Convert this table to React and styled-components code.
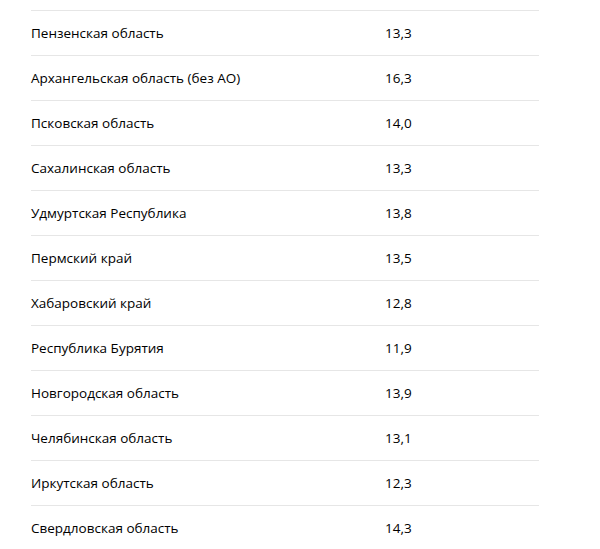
import styled, { createGlobalStyle } from 'styled-components';

const rows = [
  ['Пензенская область', '13,3'],
  ['Архангельская область (без АО)', '16,3'],
  ['Псковская область', '14,0'],
  ['Сахалинская область', '13,3'],
  ['Удмуртская Республика', '13,8'],
  ['Пермский край', '13,5'],
  ['Хабаровский край', '12,8'],
  ['Республика Бурятия', '11,9'],
  ['Новгородская область', '13,9'],
  ['Челябинская область', '13,1'],
  ['Иркутская область', '12,3'],
  ['Свердловская область', '14,3'],
];

const GlobalStyle = createGlobalStyle`
  html, body {
    margin: 0;
    padding: 0;
    background: #ffffff;
  }
  body {
    font-family: 'Open Sans', Arial, sans-serif;
    color: #000000;
    overflow: hidden;
  }
`;

const Page = styled.div`
  padding: 10px 0 0 31px;
`;

const Table = styled.div`
  width: 508px;
`;

const Row = styled.div`
  display: grid;
  grid-template-columns: 354px 1fr;
  align-items: center;
  height: 45px;
  box-sizing: border-box;
  border-top: 1px solid #e6e6e6;
`;

const Cell = styled.span`
  font-size: 13.5px;
  line-height: 16px;
  color: #000000;
`;

const App = () => (
  <Page>
    <GlobalStyle />
    <Table>
      {rows.map(([name, value]) => (
        <Row key={name}>
          <Cell>{name}</Cell>
          <Cell>{value}</Cell>
        </Row>
      ))}
    </Table>
  </Page>
);

export default App;
